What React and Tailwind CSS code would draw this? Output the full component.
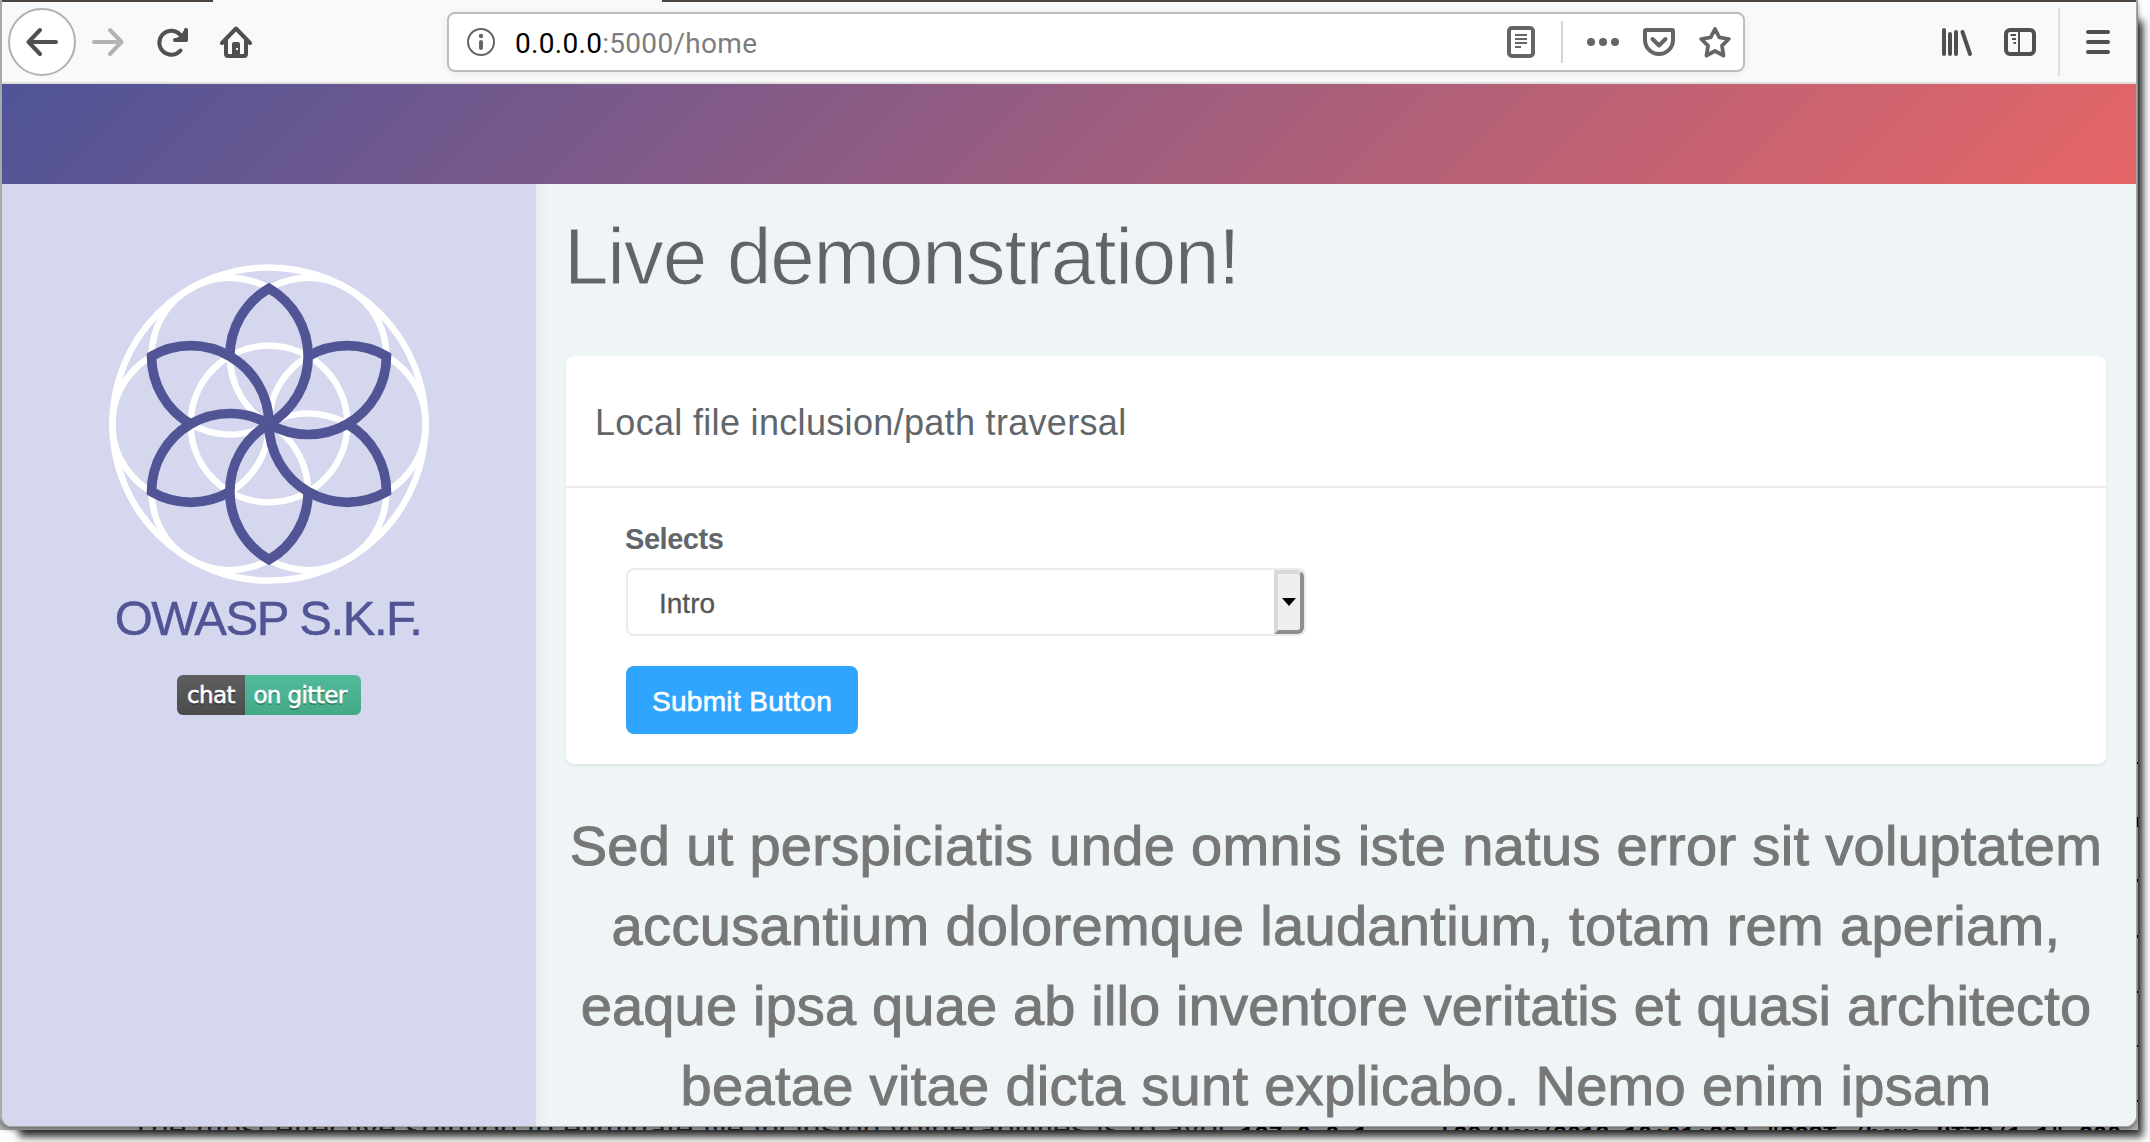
import React from "react";

const R = 78.3;
const DX = 39.15;
const DY = 67.81;
const TIP = 135.62;
const ANGLES = [0, 60, 120, 180, 240, 300];

function Icon({ children, className = "", width = 32 }) {
  return (
    <svg
      width={width}
      height="32"
      viewBox={`0 0 ${width} 32`}
      fill="none"
      stroke="currentColor"
      strokeWidth="4"
      strokeLinecap="round"
      strokeLinejoin="round"
      className={`shrink-0 ${className}`}
    >
      {children}
    </svg>
  );
}

function Toolbar() {
  return (
    <div className="flex h-[82px] shrink-0 items-center border-b-2 border-[#dfdfdf] bg-[#f9f9fa] pb-0 text-[#505052]">
      <div className="ml-[6px] flex size-[68px] shrink-0 items-center justify-center rounded-full border-2 border-[#b1b1b1] bg-white">
        <Icon>
          <path d="M30 16H3M14 4L2.500 16L14 28" />
        </Icon>
      </div>
      <Icon className="ml-4 text-[#b3b3b3]">
        <path d="M2 16H29M18 4L29.500 16L18 28" />
      </Icon>
      <Icon className="ml-8">
        <path d="M24.500 24.500A12 12 0 1 1 23.500 8L27.500 12M30 4V14H19" />
        <path d="M30 4V14H20L26 11Z" fill="currentColor" strokeWidth="3.500" />
      </Icon>
      <Icon className="ml-8">
        <path d="M2 17L16 2.500L30 17M6 15V28Q6 30 8 30H24Q26 30 26 28V15" />
        <path d="M12 30V18Q12 16 14 16H18Q20 16 20 18V30Z" fill="currentColor" stroke="none" />
        <rect x="16" y="22" width="2" height="2" fill="#f9f9fa" stroke="none" />
      </Icon>
      <div className="ml-[195px] flex h-[60px] w-[1298px] shrink-0 items-center gap-6 rounded-lg border-2 border-[#bebebe] bg-white pr-3 pl-4 text-[#656565] shadow-[0_2px_8px_rgba(0,0,0,0.06)]">
        <Icon className="-mr-1.5">
          <circle cx="16" cy="16" r="13" strokeWidth="2" />
          <path d="M16 16V22" />
          <circle cx="16" cy="10" r="2.200" fill="currentColor" stroke="none" />
        </Icon>
        <div className="flex-1 pt-[3px] font-['Roboto',sans-serif] text-[28px] leading-none tracking-[0.300px] whitespace-nowrap text-[#7d7d7d]">
          <span className="text-black">0.0.0.0</span>:5000/home
        </div>
        <Icon>
          <rect x="4" y="2" width="24" height="28" rx="3" />
          <path d="M10 9H22M10 13H22M10 17H22M10 21H16" strokeWidth="2" strokeLinecap="butt" />
        </Icon>
        <div className="h-[42px] w-[2px] bg-[#d4d4d4]" />
        <Icon>
          <g fill="currentColor" stroke="none">
            <circle cx="4" cy="16" r="4" />
            <circle cx="16" cy="16" r="4" />
            <circle cx="28" cy="16" r="4" />
          </g>
        </Icon>
        <Icon>
          <path d="M2 5Q2 4 3 4H29Q30 4 30 5V14A14 14 0 0 1 2 14Z" />
          <path d="M9.500 13L16 19.500L22.500 13" />
        </Icon>
        <Icon>
          <path
            d="M16 3L20.300 11.400L29.800 13L23 19.700L24.500 29.500L16 25L7.500 29.500L9 19.700L2.200 13L11.700 11.400Z"
            strokeWidth="3.800"
          />
        </Icon>
      </div>
      <Icon className="ml-[196px]">
        <path d="M3 4V28M9 8V28M15 6V28M21.500 6L29 28" />
      </Icon>
      <Icon className="ml-[31px]">
        <rect x="2" y="4" width="28" height="24" rx="4" />
        <path d="M15 5V27M6.500 9H12M8 13H12M9.500 17H12" strokeWidth="2" strokeLinecap="butt" />
      </Icon>
      <div className="ml-[22px] h-[68px] w-[2px] bg-[#dedede]" />
      <Icon className="ml-[22px]">
        <path d="M6 6H26M6 16H26M6 26H26" />
      </Icon>
    </div>
  );
}

function FlowerLogo() {
  return (
    <svg width="320" height="320" viewBox="-160 -160 320 320" fill="none">
      <g stroke="#ffffff" strokeWidth="6.500">
        <circle r={R * 2} />
        <circle r={R} />
        {ANGLES.map((a) => (
          <circle key={a} cx={R} cy="0" r={R} transform={`rotate(${a})`} />
        ))}
      </g>
      <g stroke="#515595" strokeWidth="9.700" strokeMiterlimit="10">
        {ANGLES.map((a) => (
          <path
            key={a}
            transform={`rotate(${a})`}
            d={`M0 0A${R} ${R} 0 0 0 0 ${-TIP}A${R} ${R} 0 0 0 ${-DX} ${-DY}`}
          />
        ))}
      </g>
    </svg>
  );
}

function Sidebar() {
  return (
    <aside className="flex w-[534px] shrink-0 flex-col items-center bg-[#d5d7ee] pt-[80px] font-['Liberation_Sans',sans-serif]">
      <FlowerLogo />
      <div className="mt-[4px] pr-[2px] text-[49px] leading-[60px] tracking-[-1.450px] whitespace-nowrap text-[#515595] [-webkit-text-stroke:0.500px_#515595]">
        OWASP S.K.F.
      </div>
      <div className="mt-[27px] flex h-10 overflow-hidden rounded-md font-['DejaVu_Sans',sans-serif] text-[23px] leading-10 tracking-[-0.600px] text-white [-webkit-text-stroke:0.500px_white] [text-shadow:0_2px_0_rgba(1,1,1,0.3)]">
        <div className="w-[68px] bg-linear-to-b from-[#5f5f5f] to-[#4b4b4b] text-center">chat</div>
        <div className="w-[116px] bg-linear-to-b from-[#52bb9c] to-[#43a888] pr-1.5 text-center">on gitter</div>
      </div>
    </aside>
  );
}

function DemoCard() {
  return (
    <section className="h-[408px] rounded-lg bg-white text-[#60666a] shadow-[0_2px_3px_rgba(0,0,0,0.07)]">
      <div className="flex h-[132px] items-center border-b-2 border-[#ececec] pt-[3px] pl-[29px]">
        <h2 className="text-[36px] leading-none tracking-[0.320px] whitespace-nowrap">
          Local file inclusion/path traversal
        </h2>
      </div>
      <div className="flex flex-col items-start px-[60px] pt-[32px]">
        <label className="-ml-px text-[29px] leading-[38px] font-bold tracking-[-0.450px]">Selects</label>
        <div className="mt-[10px] flex h-[68px] w-[680px] items-center justify-between overflow-hidden rounded-lg border-2 border-[#ececec] pl-[31px]">
          <span className="pt-[3px] text-[28px] tracking-[0px] text-[#555] [-webkit-text-stroke:0.300px_#555]">Intro</span>
          <div className="flex h-full w-[30px] items-center justify-center rounded-r-md border-4 border-t-[#d9d9d9] border-r-[#8f8f8f] border-b-[#8f8f8f] border-l-[#d9d9d9] bg-[#efefef]">
            <svg width="14" height="8" viewBox="0 0 14 8">
              <path d="M0 0H14L7 8Z" fill="#000" />
            </svg>
          </div>
        </div>
        <button className="mt-[30px] h-[68px] w-[232px] rounded-lg bg-[#30a5ff] pt-[3px] text-[28px] tracking-[0.330px] whitespace-nowrap text-white [-webkit-text-stroke:0.600px_white]">
          Submit Button
        </button>
      </div>
    </section>
  );
}

function Backdrop() {
  return (
    <div className="col-start-1 row-start-1 flex h-[1130px] w-[2138px] flex-col justify-end overflow-hidden bg-[#b4b4b4]">
      <div className="flex h-[360px] flex-col items-end justify-between pb-5">
        <i className="h-[2px] w-[2px] bg-black" />
        <i className="h-[10px] w-[2px] bg-black" />
        <i className="h-[3px] w-[2px] bg-black" />
        <i className="h-[3px] w-[2px] bg-black" />
        <i className="h-[2px] w-[2px] bg-black" />
        <i className="h-[2px] w-[2px] bg-black" />
        <i className="h-[2px] w-[2px] bg-black" />
      </div>
      <div className="flex h-[8px] items-start whitespace-nowrap text-[#20262b]">
        <span className="ml-[131px] w-[1109px] font-['Liberation_Sans',sans-serif] text-[32px] leading-[12px] tracking-[0.250px]">
          The most effective solution to eliminate file inclusion vulnerabilities is to avoi
        </span>
        <span className="font-['Liberation_Mono',monospace] text-[23.700px] leading-[28px] font-bold text-black">
          127.0.0.1 - - [29/Nov/2018 10:01:22] "POST /home HTTP/1.1" 200
        </span>
      </div>
    </div>
  );
}

export default function App() {
  return (
    <div className="h-[1142px] w-[2150px] overflow-hidden bg-white font-['Liberation_Sans',sans-serif]">
      <div className="grid h-[1130px] w-[2138px] shadow-[12px_14px_8px_-7px_#333]">
        <Backdrop />
        <div className="z-10 col-start-1 row-start-1 flex h-[1127px] w-[2137px] flex-col overflow-hidden rounded-b-[12px] border-r border-b border-l-2 border-[#a8a8a8] shadow-[0_2px_6px_rgba(0,0,0,0.5)]">
          <div className="flex h-[2px] shrink-0 justify-between bg-[#f9f9fa]">
            <div className="w-[211px] bg-[#4c4540]" />
            <div className="w-[1474px] bg-[#4c4540]" />
          </div>
          <Toolbar />
          <div className="h-[100px] shrink-0 bg-[linear-gradient(135deg,#4f5498,#e66667)]" />
          <div className="flex min-h-0 flex-1 bg-[#eff4f7]">
            <Sidebar />
            <main className="flex-1 bg-[linear-gradient(to_right,#eaeef1,#eff4f7_14px)] pr-[30px] pl-[30px]">
              <h1 className="-ml-[2px] pt-[27px] text-[80px] leading-[92px] tracking-[-1.200px] whitespace-nowrap text-[#5f6468] [-webkit-text-stroke:1px_#eff4f7]">
                Live demonstration!
              </h1>
              <div className="h-[53px]" />
              <DemoCard />
              <p className="mt-[42px] text-center text-[56px] leading-[80px] tracking-[0.320px] whitespace-nowrap text-[#777] [-webkit-text-stroke:1px_#777]">
                Sed ut perspiciatis unde omnis iste natus error sit voluptatem
                <br />
                accusantium doloremque laudantium, totam rem aperiam,
                <br />
                <span className="tracking-[0.160px]">
                  eaque ipsa quae ab illo inventore veritatis et quasi architecto
                </span>
                <br />
                beatae vitae dicta sunt explicabo. Nemo enim ipsam
              </p>
            </main>
          </div>
        </div>
      </div>
    </div>
  );
}
